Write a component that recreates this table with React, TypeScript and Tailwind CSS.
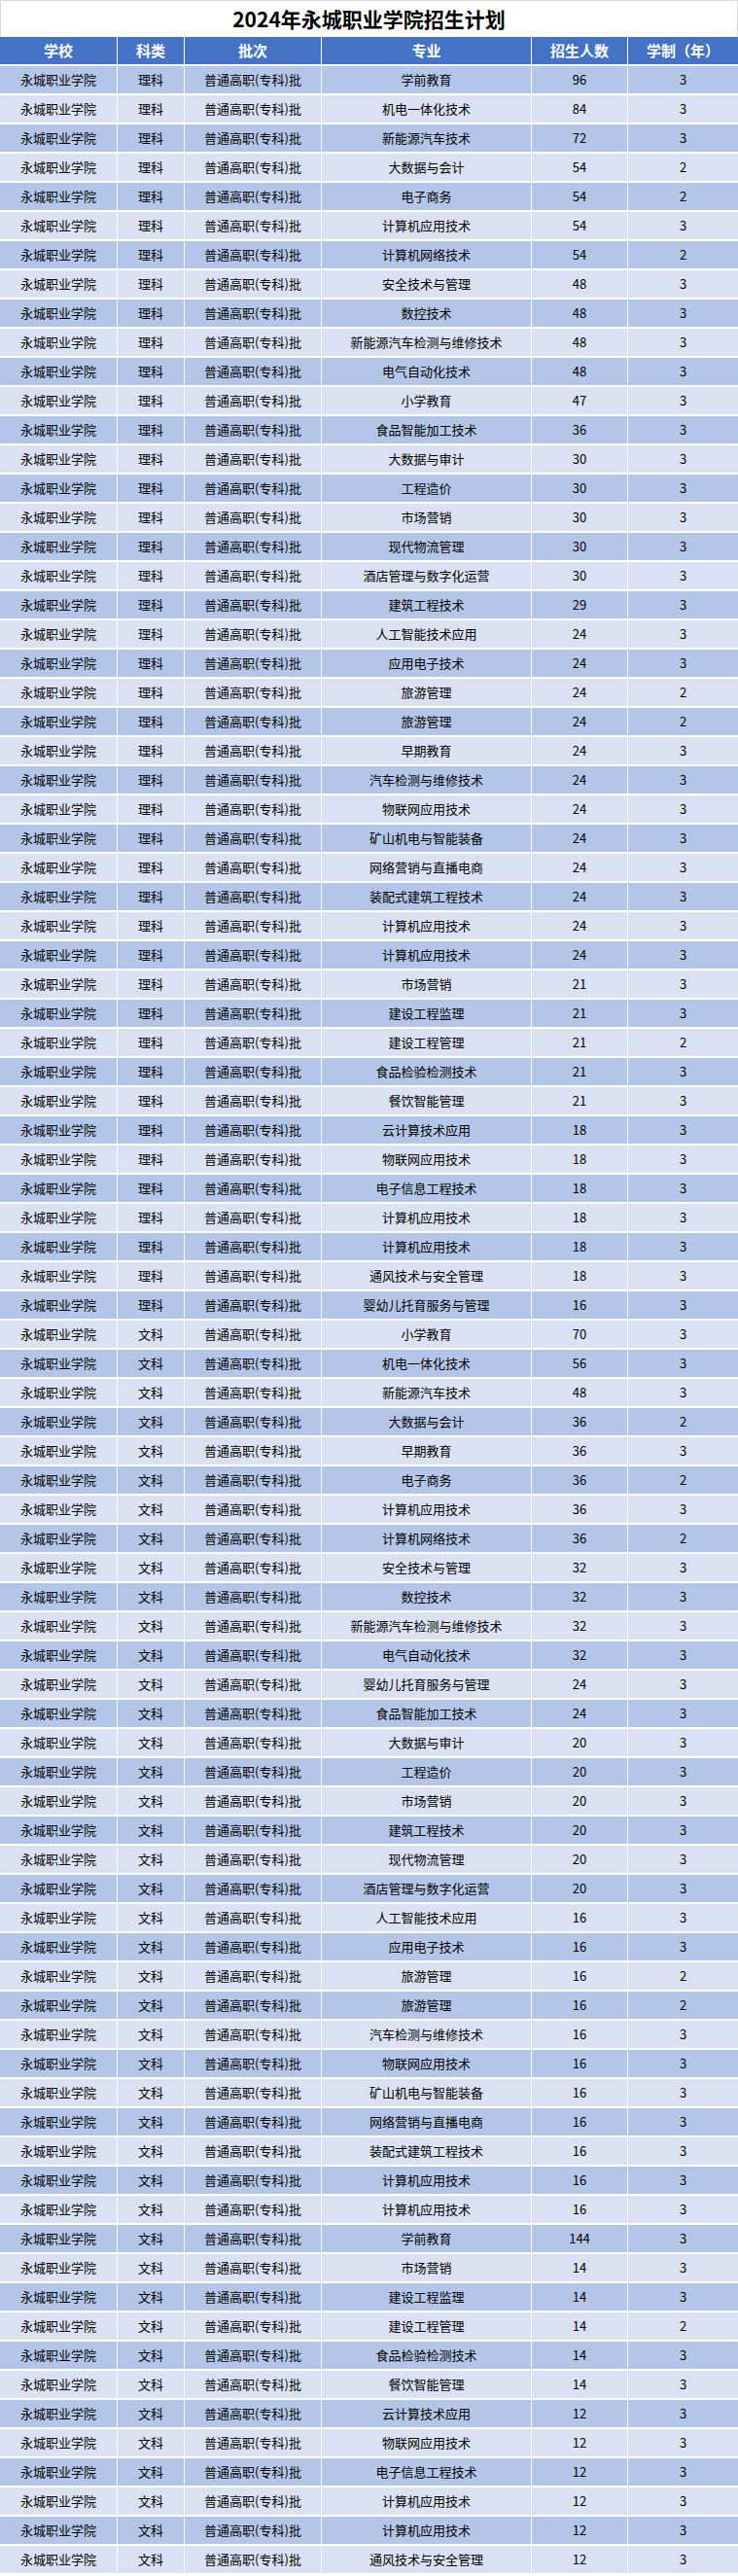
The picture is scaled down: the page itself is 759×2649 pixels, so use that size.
const rows: [string, string, number, number][] = [
  ["理科", "学前教育", 96, 3],
  ["理科", "机电一体化技术", 84, 3],
  ["理科", "新能源汽车技术", 72, 3],
  ["理科", "大数据与会计", 54, 2],
  ["理科", "电子商务", 54, 2],
  ["理科", "计算机应用技术", 54, 3],
  ["理科", "计算机网络技术", 54, 2],
  ["理科", "安全技术与管理", 48, 3],
  ["理科", "数控技术", 48, 3],
  ["理科", "新能源汽车检测与维修技术", 48, 3],
  ["理科", "电气自动化技术", 48, 3],
  ["理科", "小学教育", 47, 3],
  ["理科", "食品智能加工技术", 36, 3],
  ["理科", "大数据与审计", 30, 3],
  ["理科", "工程造价", 30, 3],
  ["理科", "市场营销", 30, 3],
  ["理科", "现代物流管理", 30, 3],
  ["理科", "酒店管理与数字化运营", 30, 3],
  ["理科", "建筑工程技术", 29, 3],
  ["理科", "人工智能技术应用", 24, 3],
  ["理科", "应用电子技术", 24, 3],
  ["理科", "旅游管理", 24, 2],
  ["理科", "旅游管理", 24, 2],
  ["理科", "早期教育", 24, 3],
  ["理科", "汽车检测与维修技术", 24, 3],
  ["理科", "物联网应用技术", 24, 3],
  ["理科", "矿山机电与智能装备", 24, 3],
  ["理科", "网络营销与直播电商", 24, 3],
  ["理科", "装配式建筑工程技术", 24, 3],
  ["理科", "计算机应用技术", 24, 3],
  ["理科", "计算机应用技术", 24, 3],
  ["理科", "市场营销", 21, 3],
  ["理科", "建设工程监理", 21, 3],
  ["理科", "建设工程管理", 21, 2],
  ["理科", "食品检验检测技术", 21, 3],
  ["理科", "餐饮智能管理", 21, 3],
  ["理科", "云计算技术应用", 18, 3],
  ["理科", "物联网应用技术", 18, 3],
  ["理科", "电子信息工程技术", 18, 3],
  ["理科", "计算机应用技术", 18, 3],
  ["理科", "计算机应用技术", 18, 3],
  ["理科", "通风技术与安全管理", 18, 3],
  ["理科", "婴幼儿托育服务与管理", 16, 3],
  ["文科", "小学教育", 70, 3],
  ["文科", "机电一体化技术", 56, 3],
  ["文科", "新能源汽车技术", 48, 3],
  ["文科", "大数据与会计", 36, 2],
  ["文科", "早期教育", 36, 3],
  ["文科", "电子商务", 36, 2],
  ["文科", "计算机应用技术", 36, 3],
  ["文科", "计算机网络技术", 36, 2],
  ["文科", "安全技术与管理", 32, 3],
  ["文科", "数控技术", 32, 3],
  ["文科", "新能源汽车检测与维修技术", 32, 3],
  ["文科", "电气自动化技术", 32, 3],
  ["文科", "婴幼儿托育服务与管理", 24, 3],
  ["文科", "食品智能加工技术", 24, 3],
  ["文科", "大数据与审计", 20, 3],
  ["文科", "工程造价", 20, 3],
  ["文科", "市场营销", 20, 3],
  ["文科", "建筑工程技术", 20, 3],
  ["文科", "现代物流管理", 20, 3],
  ["文科", "酒店管理与数字化运营", 20, 3],
  ["文科", "人工智能技术应用", 16, 3],
  ["文科", "应用电子技术", 16, 3],
  ["文科", "旅游管理", 16, 2],
  ["文科", "旅游管理", 16, 2],
  ["文科", "汽车检测与维修技术", 16, 3],
  ["文科", "物联网应用技术", 16, 3],
  ["文科", "矿山机电与智能装备", 16, 3],
  ["文科", "网络营销与直播电商", 16, 3],
  ["文科", "装配式建筑工程技术", 16, 3],
  ["文科", "计算机应用技术", 16, 3],
  ["文科", "计算机应用技术", 16, 3],
  ["文科", "学前教育", 144, 3],
  ["文科", "市场营销", 14, 3],
  ["文科", "建设工程监理", 14, 3],
  ["文科", "建设工程管理", 14, 2],
  ["文科", "食品检验检测技术", 14, 3],
  ["文科", "餐饮智能管理", 14, 3],
  ["文科", "云计算技术应用", 12, 3],
  ["文科", "物联网应用技术", 12, 3],
  ["文科", "电子信息工程技术", 12, 3],
  ["文科", "计算机应用技术", 12, 3],
  ["文科", "计算机应用技术", 12, 3],
  ["文科", "通风技术与安全管理", 12, 3],
]

const grid = "grid grid-cols-[120px_68px_140px_215px_98px_1fr] gap-x-px h-[30px] border-b-2 border-white"
const headers = ["学校", "科类", "批次", "专业", "招生人数", "学制（年）"]

export default function App() {
  return (
    <div className="w-[759px] bg-white text-black font-['Noto_Sans_CJK_SC','Noto_Sans',sans-serif]">
      {/* Title */}
      <div className="h-[38px] border border-b-0 border-[#d9d9d9] flex items-center justify-center">
        <h1 className="text-[21px] font-bold leading-none">2024年永城职业学院招生计划</h1>
      </div>

      {/* Header */}
      <div className={grid}>
        {headers.map((h) => (
          <div key={h} className="bg-[#4472C4] text-white font-bold text-[15px] flex items-center justify-center">
            {h}
          </div>
        ))}
      </div>

      {rows.map(([kind, major, count, years], i) => {
        const bg = i % 2 === 0 ? "bg-[#B4C6E7]" : "bg-[#D9E1F2]"
        const cells = ["永城职业学院", kind, "普通高职(专科)批", major, String(count), String(years)]
        return (
          <div key={i} className={grid}>
            {cells.map((c, j) => (
              <div key={j} className={`${bg} text-[13px] flex items-center justify-center whitespace-nowrap`}>
                {c}
              </div>
            ))}
          </div>
        )
      })}
    </div>
  )
}
